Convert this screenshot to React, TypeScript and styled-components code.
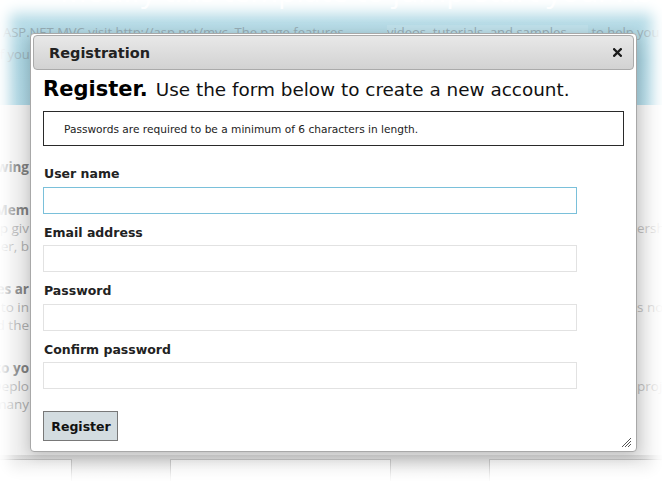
import React from "react";
import styled, { createGlobalStyle } from "styled-components";

const GlobalStyle = createGlobalStyle`
  html, body { margin: 0; padding: 0; background: #fff; }
  body { width: 662px; height: 481px; overflow: hidden; }
  * { box-sizing: border-box; }
`;

const Page = styled.div`
  position: relative;
  width: 662px;
  height: 481px;
  overflow: hidden;
  display: flex;
  flex-direction: column;
  background: #ededed;
  font-family: "Open Sans", "Noto Sans", sans-serif;
`;

const Header = styled.header`
  height: 105px;
  flex: none;
  background: linear-gradient(to bottom, #e4f2f6 0px, #b9dde8 22px, #a8d2df 60px, #acd4e1 105px);
  overflow: hidden;
`;

const SiteTitle = styled.div`
  margin-top: -24px;
  padding-left: 60px;
  height: 30px;
  font-size: 30px;
  line-height: 30px;
  color: #ffffff;
  white-space: nowrap;
  opacity: 0.85;
`;

const LeadRow = styled.div<{ $first?: boolean }>`
  display: flex;
  align-items: center;
  height: 22px;
  margin-top: ${(p) => (p.$first ? 15 : 0)}px;
  font-size: 13px;
  color: #97adb5;
  white-space: nowrap;
`;

const LeadText = styled.span<{ $w?: number; $shift?: number }>`
  flex: none;
  width: ${(p) => (p.$w ? `${p.$w}px` : "auto")};
  margin-left: ${(p) => p.$shift ?? 0}px;
  overflow: hidden;
`;

const LeadMark = styled.span`
  flex: none;
  width: 201px;
  height: 15px;
  line-height: 15px;
  background: #bfe0ea;
  overflow: hidden;
`;

const Main = styled.main`
  flex: 1;
  padding-top: 53px;
  display: flex;
  flex-direction: column;
  gap: 25px;
`;

const Section = styled.section`
  display: flex;
  flex-direction: column;
`;

const Line = styled.div`
  display: grid;
  grid-template-columns: 30px 606px 26px;
  height: 18px;
  line-height: 18px;
  font-size: 13.5px;
  white-space: nowrap;
`;

const LeftFrag = styled.span<{ $bold?: boolean }>`
  display: flex;
  justify-content: flex-end;
  overflow: hidden;
  padding-right: 1px;
  color: ${(p) => (p.$bold ? "#7c7c7c" : "#a9a9a9")};
  font-weight: ${(p) => (p.$bold ? 700 : 400)};
`;

const RightFrag = styled.span`
  grid-column: 3;
  overflow: hidden;
  color: #b5b5b5;
  padding-left: 1px;
`;

const Footer = styled.footer`
  height: 26px;
  flex: none;
  display: flex;
  gap: 98px;
  margin-left: -149px;
  padding-top: 4px;
  background: linear-gradient(to bottom, #d6d6d6, #f2f2f2);
`;

const FooterBox = styled.div`
  flex: none;
  width: 221px;
  border: 1px solid #bdbdbd;
  border-bottom: none;
  background: linear-gradient(to bottom, #ececec, #f7f7f7);
`;

const Vignette = styled.div`
  position: absolute;
  inset: 0;
  pointer-events: none;
  box-shadow: inset 0 0 14px 10px #ffffff;
`;

const Dialog = styled.div`
  position: absolute;
  left: 30px;
  top: 33px;
  width: 607px;
  height: 419px;
  display: flex;
  flex-direction: column;
  padding: 1px 2px 0 2px;
  background: #ffffff;
  border: 1px solid #a8a8a8;
  border-radius: 4px;
  box-shadow: 0 3px 14px rgba(0, 0, 0, 0.22);
  font-family: "DejaVu Sans", Verdana, sans-serif;
  color: #111;
`;

const TitleBar = styled.div`
  height: 35px;
  flex: none;
  display: flex;
  align-items: center;
  justify-content: space-between;
  padding: 0 11px 0 15px;
  border: 1px solid #aaaaaa;
  border-radius: 4px;
  background: linear-gradient(to bottom, #e8e8e8, #d2d2d2);
`;

const Title = styled.span`
  font-size: 14.5px;
  font-weight: 700;
  color: #222;
`;

const CloseButton = styled.span`
  display: flex;
  width: 10px;
  height: 10px;
  align-items: center;
  justify-content: center;
`;

const Body = styled.div`
  position: relative;
  flex: 1;
  padding: 6px 0 0 10px;
  display: flex;
  flex-direction: column;
`;

const Heading = styled.h2`
  margin: 0;
  height: 26px;
  line-height: 26px;
  font-size: 21px;
  font-weight: 700;
  color: #000;
  white-space: nowrap;
`;

const Sub = styled.span`
  font-size: 18.4px;
  font-weight: 400;
  color: #111;
  margin-left: 8px;
`;

const Notice = styled.div`
  margin-top: 9px;
  width: 581px;
  height: 35px;
  display: flex;
  align-items: center;
  padding-left: 20px;
  border: 1px solid #2a2a2a;
  font-size: 10.6px;
  color: #222;
`;

const Form = styled.form`
  margin-top: 20px;
  display: flex;
  flex-direction: column;
  gap: 11px;
`;

const Field = styled.div`
  display: flex;
  flex-direction: column;
`;

const Label = styled.label`
  height: 16px;
  line-height: 16px;
  margin-bottom: 4.5px;
  padding-left: 1px;
  font-size: 12.5px;
  font-weight: 700;
  color: #222;
`;

const Input = styled.input<{ $focus?: boolean }>`
  width: 534px;
  height: 27px;
  margin: 0;
  border: 1px solid ${(p) => (p.$focus ? "#7ac0da" : "#e2e2e2")};
  background: #fff;
  outline: none;
  font-family: inherit;
`;

const SubmitButton = styled.button`
  margin-top: 11px;
  width: 75px;
  height: 30px;
  padding: 0 0 0 1px;
  border: 1px solid #787878;
  background: #d3dce0;
  font-family: inherit;
  font-size: 12.5px;
  font-weight: 700;
  color: #111;
  cursor: pointer;
`;

const ResizeHandle = styled.svg`
  position: absolute;
  right: 2px;
  bottom: 3px;
`;

const sections = [
  [
    { l: "1 Mem", b: true, r: "" },
    { l: "app giv", b: false, r: "ership" },
    { l: "user, b", b: false, r: "" },
  ],
  [
    { l: "es ar", b: true, r: "" },
    { l: "to in", b: false, r: "s not" },
    { l: "ld the", b: false, r: "" },
  ],
  [
    { l: "to yo", b: true, r: "" },
    { l: "Deplo", b: false, r: "projec" },
    { l: "many", b: false, r: "" },
  ],
];

const fields = [
  { label: "User name", focus: true, type: "text" },
  { label: "Email address", focus: false, type: "text" },
  { label: "Password", focus: false, type: "password" },
  { label: "Confirm password", focus: false, type: "password" },
];

export default function App() {
  return (
    <>
      <GlobalStyle />
      <Page>
        <Header>
          <SiteTitle>Modify this template to jump-start your ASP.NET MVC application.</SiteTitle>
          <LeadRow $first>
            <LeadText $w={384} $shift={3}>ASP.NET MVC visit http://asp.net/mvc. The page features</LeadText>
            <LeadMark>videos, tutorials, and samples</LeadMark>
            <LeadText>&nbsp;to help you get the most from ASP.NET MVC.</LeadText>
          </LeadRow>
          <LeadRow>
            <LeadText $shift={-4}>If you have any questions about ASP.NET MVC visit our forums, and you</LeadText>
          </LeadRow>
        </Header>
        <Main>
          <Line>
            <LeftFrag $bold>following</LeftFrag>
          </Line>
          {sections.map((s, i) => (
            <Section key={i}>
              {s.map((ln, j) => (
                <Line key={j}>
                  <LeftFrag $bold={ln.b}>{ln.l}</LeftFrag>
                  {ln.r && <RightFrag>{ln.r}</RightFrag>}
                </Line>
              ))}
            </Section>
          ))}
        </Main>
        <Footer>
          <FooterBox />
          <FooterBox />
          <FooterBox />
        </Footer>
        <Vignette />
        <Dialog role="dialog">
          <TitleBar>
            <Title>Registration</Title>
            <CloseButton aria-label="close">
              <svg width="9" height="9" viewBox="0 0 9 9">
                <path d="M1.2 1.2 L7.8 7.8 M7.8 1.2 L1.2 7.8" stroke="#1a1a1a" strokeWidth="2.3" strokeLinecap="square" />
              </svg>
            </CloseButton>
          </TitleBar>
          <Body>
            <Heading>
              Register.<Sub>Use the form below to create a new account.</Sub>
            </Heading>
            <Notice>Passwords are required to be a minimum of 6 characters in length.</Notice>
            <Form onSubmit={(e) => e.preventDefault()}>
              {fields.map((f) => (
                <Field key={f.label}>
                  <Label>{f.label}</Label>
                  <Input type={f.type} $focus={f.focus} />
                </Field>
              ))}
              <SubmitButton type="submit">Register</SubmitButton>
            </Form>
            <ResizeHandle width="12" height="12" viewBox="0 0 12 12">
              <path d="M11 2 L2 11 M11 5 L5 11 M11 8 L8 11" stroke="#555" strokeWidth="1" />
            </ResizeHandle>
          </Body>
        </Dialog>
      </Page>
    </>
  );
}
